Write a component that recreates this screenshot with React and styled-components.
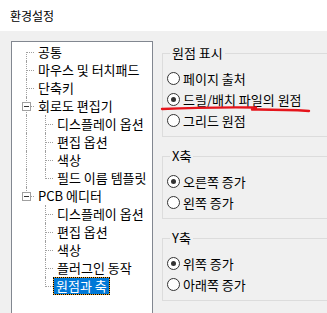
import React from "react";
import styled, { createGlobalStyle } from "styled-components";

const GlobalStyle = createGlobalStyle`
  html, body {
    margin: 0;
    padding: 0;
    background: #f0f0f0;
    overflow: hidden;
  }
  body {
    font-family: "Noto Sans CJK KR", "Noto Sans", sans-serif;
    font-size: 13px;
    color: #000;
  }
`;

const tree = [
  { label: "공통" },
  { label: "마우스 및 터치패드" },
  { label: "단축키" },
  {
    label: "회로도 편집기",
    children: [
      { label: "디스플레이 옵션" },
      { label: "편집 옵션" },
      { label: "색상" },
      { label: "필드 이름 템플릿" },
    ],
  },
  {
    label: "PCB 에디터",
    children: [
      { label: "디스플레이 옵션" },
      { label: "편집 옵션" },
      { label: "색상" },
      { label: "플러그인 동작" },
      { label: "원점과 축", selected: true },
    ],
  },
];

// flatten the tree into rows that know which connector lines to draw
const flatten = (nodes, level = 0, rails = []) =>
  nodes.flatMap((node, i) => {
    const last = i === nodes.length - 1;
    const first = i === 0 && level === 0;
    const row = { ...node, level, rails, last, first };
    const kids = node.children
      ? flatten(node.children, level + 1, [...rails, !last])
      : [];
    return [row, ...kids];
  });

const rows = flatten(tree);

const groups = [
  {
    title: "원점 표시",
    options: ["페이지 출처", "드릴/배치 파일의 원점", "그리드 원점"],
    checked: 1,
  },
  { title: "X축", options: ["오른쪽 증가", "왼쪽 증가"], checked: 0 },
  { title: "Y축", options: ["위쪽 증가", "아래쪽 증가"], checked: 0 },
];

const App = () => {
  return (
    <Window>
      <GlobalStyle />
      <TitleBar>환경설정</TitleBar>
      <Body>
        <TreeBox>
          {rows.map((row, i) => (
            <TreeRow key={i}>
              {row.rails.map((on, j) => (
                <Rail key={j} $on={on} />
              ))}
              <Elbow $up={!row.first} $down={!row.last}>
                {row.children && <Expander />}
              </Elbow>
              <Label>
                {row.selected ? <Highlight>{row.label}</Highlight> : row.label}
              </Label>
            </TreeRow>
          ))}
        </TreeBox>
        <Settings>
          {groups.map((g) => (
            <Group key={g.title}>
              <Legend>{g.title}</Legend>
              {g.options.map((opt, k) => (
                <RadioRow key={opt}>
                  <Radio $checked={k === g.checked} />
                  <span>{opt}</span>
                </RadioRow>
              ))}
            </Group>
          ))}
        </Settings>
      </Body>
      <Scribble viewBox="0 0 327 313" width="327" height="313">
        <path
          d="M162 109 Q 205 107 256 107.5 M252 109.5 Q 285 109.3 309 111"
          stroke="#e5141b"
          strokeWidth="2.4"
          fill="none"
          strokeLinecap="round"
        />
      </Scribble>
    </Window>
  );
};

export default App;

const Window = styled.div`
  position: relative;
  width: 327px;
  height: 313px;
  overflow: hidden;
  background: #f0f0f0;
`;

const TitleBar = styled.div`
  height: 31px;
  background: #fff;
  display: flex;
  align-items: center;
  padding-left: 10px;
  box-sizing: border-box;
  font-size: 12px;
  padding-bottom: 1px;
`;

const Body = styled.div`
  display: flex;
  align-items: flex-start;
  padding: 10px 0 0 11px;
`;

const TreeBox = styled.div`
  width: 142px;
  height: 300px;
  box-sizing: border-box;
  border: 1px solid #828790;
  background: #fff;
  padding: 1px 0 0 5px;
  flex-shrink: 0;
  overflow: hidden;
`;

const TreeRow = styled.div`
  display: flex;
  height: 18px;
  align-items: center;
  white-space: nowrap;
`;

const Rail = styled.div`
  position: relative;
  width: 19px;
  height: 18px;
  flex-shrink: 0;
  &::before {
    content: "";
    display: ${(p) => (p.$on ? "block" : "none")};
    position: absolute;
    left: 9px;
    top: 0;
    bottom: 0;
    border-left: 1px dotted #a0a0a0;
  }
`;

const Elbow = styled.div`
  position: relative;
  width: 19px;
  height: 18px;
  flex-shrink: 0;
  &::before {
    content: "";
    position: absolute;
    left: 9px;
    top: ${(p) => (p.$up ? "0" : "9px")};
    bottom: ${(p) => (p.$down ? "0" : "8px")};
    border-left: 1px dotted #a0a0a0;
  }
  &::after {
    content: "";
    position: absolute;
    left: 10px;
    top: 9px;
    width: 7px;
    border-top: 1px dotted #a0a0a0;
  }
`;

const Expander = styled.div`
  position: absolute;
  left: 5px;
  top: 5px;
  width: 9px;
  height: 9px;
  box-sizing: border-box;
  border: 1px solid #a0a0a0;
  background: #fff;
  z-index: 1;
  &::after {
    content: "";
    position: absolute;
    left: 1px;
    top: 3px;
    width: 5px;
    height: 1px;
    background: #333;
  }
`;

const Label = styled.div`
  padding: 0 2px;
  line-height: 18px;
`;

const Highlight = styled.span`
  display: inline-block;
  margin-left: -3px;
  padding: 0 2px;
  line-height: 16px;
  color: #fff;
  background: #0078d7;
  outline: 1px dotted #000;
  box-shadow: 0 0 0 1px #f5a623;
`;

const Settings = styled.div`
  display: flex;
  flex-direction: column;
  gap: 12px;
  margin-left: 9px;
  margin-top: 5px;
  width: 220px;
  flex-shrink: 0;
`;

const Group = styled.fieldset`
  margin: 0;
  border: 1px solid #dcdcdc;
  padding: 8px 0 5px 4px;
  min-width: 0;
`;

const Legend = styled.legend`
  margin-left: 3px;
  padding: 0 2px;
  line-height: 14px;
`;

const RadioRow = styled.div`
  display: flex;
  align-items: center;
  gap: 3px;
  height: 21px;
  white-space: nowrap;
`;

const Radio = styled.span`
  position: relative;
  width: 13px;
  height: 13px;
  box-sizing: border-box;
  border-radius: 50%;
  border: 1px solid #333;
  background: #fff;
  flex-shrink: 0;
  &::after {
    content: "";
    display: ${(p) => (p.$checked ? "block" : "none")};
    position: absolute;
    left: 3px;
    top: 3px;
    width: 5px;
    height: 5px;
    border-radius: 50%;
    background: #333;
  }
`;

const Scribble = styled.svg`
  position: absolute;
  left: 0;
  top: 0;
  pointer-events: none;
`;
